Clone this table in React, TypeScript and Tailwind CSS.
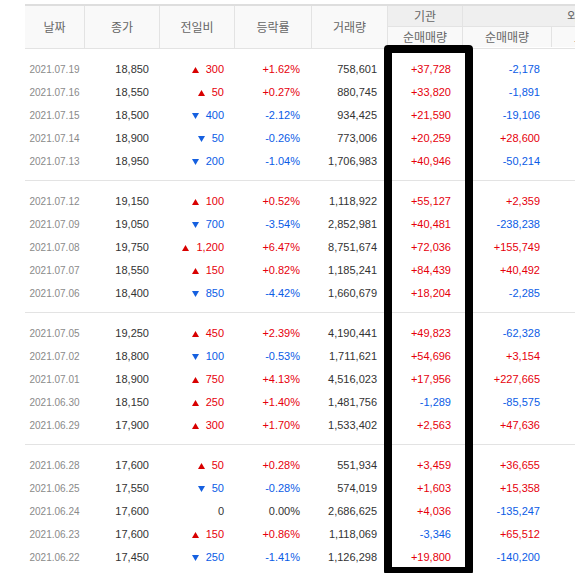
import React from "react";

type Row = [string, string, string, string, string, string, string];

const groups: Row[][] = [
  [
    ["2021.07.19", "18,850", "+300", "+1.62%", "758,601", "+37,728", "-2,178"],
    ["2021.07.16", "18,550", "+50", "+0.27%", "880,745", "+33,820", "-1,891"],
    ["2021.07.15", "18,500", "-400", "-2.12%", "934,425", "+21,590", "-19,106"],
    ["2021.07.14", "18,900", "-50", "-0.26%", "773,006", "+20,259", "+28,600"],
    ["2021.07.13", "18,950", "-200", "-1.04%", "1,706,983", "+40,946", "-50,214"],
  ],
  [
    ["2021.07.12", "19,150", "+100", "+0.52%", "1,118,922", "+55,127", "+2,359"],
    ["2021.07.09", "19,050", "-700", "-3.54%", "2,852,981", "+40,481", "-238,238"],
    ["2021.07.08", "19,750", "+1,200", "+6.47%", "8,751,674", "+72,036", "+155,749"],
    ["2021.07.07", "18,550", "+150", "+0.82%", "1,185,241", "+84,439", "+40,492"],
    ["2021.07.06", "18,400", "-850", "-4.42%", "1,660,679", "+18,204", "-2,285"],
  ],
  [
    ["2021.07.05", "19,250", "+450", "+2.39%", "4,190,441", "+49,823", "-62,328"],
    ["2021.07.02", "18,800", "-100", "-0.53%", "1,711,621", "+54,696", "+3,154"],
    ["2021.07.01", "18,900", "+750", "+4.13%", "4,516,023", "+17,956", "+227,665"],
    ["2021.06.30", "18,150", "+250", "+1.40%", "1,481,756", "-1,289", "-85,575"],
    ["2021.06.29", "17,900", "+300", "+1.70%", "1,533,402", "+2,563", "+47,636"],
  ],
  [
    ["2021.06.28", "17,600", "+50", "+0.28%", "551,934", "+3,459", "+36,655"],
    ["2021.06.25", "17,550", "-50", "-0.28%", "574,019", "+1,603", "+15,358"],
    ["2021.06.24", "17,600", "0", "0.00%", "2,686,625", "+4,036", "-135,247"],
    ["2021.06.23", "17,600", "+150", "+0.86%", "1,118,069", "-3,346", "+65,512"],
    ["2021.06.22", "17,450", "-250", "-1.41%", "1,126,298", "+19,800", "-140,200"],
  ],
];

const RED = "text-[#e6000c]";
const BLUE = "text-[#0b5ce6]";
const DARK = "text-[#333333]";

function colorOf(v: string) {
  if (v.startsWith("+")) return RED;
  if (v.startsWith("-")) return BLUE;
  return DARK;
}

function Up() {
  return (
    <svg width="7" height="6" viewBox="0 0 7 6" className="block">
      <polygon points="3.5,0 7,6 0,6" fill="#d80000" />
    </svg>
  );
}

function Down() {
  return (
    <svg width="7" height="6" viewBox="0 0 7 6" className="block">
      <polygon points="0,0 7,0 3.5,6" fill="#1560e0" />
    </svg>
  );
}

const num = "font-['Liberation_Sans',Arial,sans-serif] text-[11px]";

function Change({ v }: { v: string }) {
  if (v === "0") {
    return <span className={DARK}>0</span>;
  }
  const up = v.startsWith("+");
  return (
    <span className="flex items-center gap-[7px]">
      {up ? <Up /> : <Down />}
      <span className={up ? RED : BLUE}>{v.slice(1)}</span>
    </span>
  );
}

function DataRow({ r }: { r: Row }) {
  return (
    <div className={`flex h-[23px] items-center ${num}`}>
      <div className="w-[59px] text-center text-[10px] text-[#8a8a8a]">{r[0]}</div>
      <div className={`w-[75px] pr-[10px] text-right ${DARK}`}>{r[1]}</div>
      <div className="flex w-[75px] justify-end pr-[10px]">
        <Change v={r[2]} />
      </div>
      <div className={`w-[77px] pr-[11px] text-right ${colorOf(r[3])}`}>{r[3]}</div>
      <div className={`w-[76px] pr-[10px] text-right ${DARK}`}>{r[4]}</div>
      <div className={`w-[75px] pr-[11px] text-right ${colorOf(r[5])}`}>{r[5]}</div>
      <div className={`w-[89px] pr-[11px] text-right ${colorOf(r[6])}`}>{r[6]}</div>
      <div className="w-[89px]"></div>
      <div className="w-[64px]"></div>
    </div>
  );
}

const head =
  "flex items-center justify-center bg-[#f9f9f9] text-[12px] text-[#666666] font-['Noto_Sans_CJK_KR','Noto_Sans',sans-serif]";

export default function App() {
  return (
    <div className="relative h-[573px] w-[575px] overflow-hidden bg-white">
      <div className="w-max pl-[25px] pt-[4px]">
        {/* header */}
        <div className="flex border-t-2 border-b border-t-[#dedede] border-b-[#e3e3e3]">
          <div className={`${head} h-[42px] w-[59px]`}>날짜</div>
          <div className={`${head} h-[42px] w-[75px] border-l border-[#e3e3e3]`}>종가</div>
          <div className={`${head} h-[42px] w-[75px] border-l border-[#e3e3e3]`}>전일비</div>
          <div className={`${head} h-[42px] w-[77px] border-l border-[#e3e3e3]`}>등락률</div>
          <div className={`${head} h-[42px] w-[76px] border-l border-[#e3e3e3]`}>거래량</div>
          <div className="flex w-[75px] flex-col border-l border-[#e3e3e3]">
            <div className={`${head} h-[21px] border-b border-[#e3e3e3] bg-[#efefef]!`}>기관</div>
            <div className={`${head} h-[20px]`}>순매매량</div>
          </div>
          <div className="flex w-[242px] flex-col border-l border-[#e3e3e3]">
            <div className={`${head} h-[21px] border-b border-[#e3e3e3] bg-[#efefef]!`}>외국인</div>
            <div className="flex h-[20px]">
              <div className={`${head} w-[88px]`}>순매매량</div>
              <div className={`${head} w-[89px] border-l border-[#e3e3e3]`}>보유주수</div>
              <div className={`${head} w-[64px] border-l border-[#e3e3e3]`}>보유율</div>
            </div>
          </div>
        </div>
        {/* body */}
        {groups.map((g, i) => (
          <div key={i} className="border-b border-[#e3e3e3] pt-[9px] pb-[7px]">
            {g.map((r) => (
              <DataRow key={r[0]} r={r} />
            ))}
          </div>
        ))}
      </div>
      {/* highlight box */}
      <div className="absolute left-[384px] top-[45px] h-[530px] w-[89px] rounded-[4px] border-[8px] border-black"></div>
    </div>
  );
}
